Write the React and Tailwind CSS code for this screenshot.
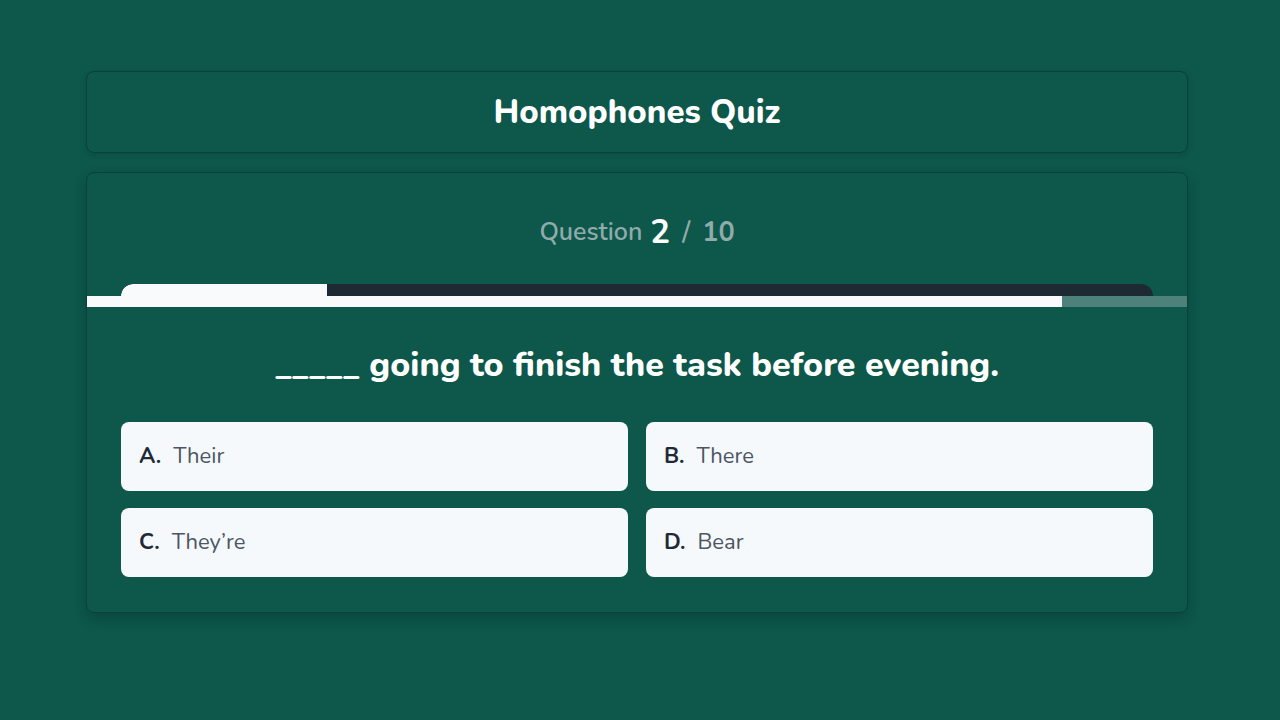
export default function App() {
  const options = [
    ["A.", "Their"],
    ["B.", "There"],
    ["C.", "They\u2019re"],
    ["D.", "Bear"],
  ];
  return (
    <div
      className="w-full min-h-[720px] bg-[#0d574b] pt-[71px] pl-[86px]"
      style={{ fontFamily: "Nunito, Lato, 'Noto Sans', sans-serif" }}
    >
      <div className="w-[1102px]">
        <div className="h-[82px] rounded-lg border border-[#0a4138] flex items-center justify-center shadow-[0_2px_6px_rgba(0,0,0,0.12)]">
          <h1 className="text-white text-[33px] font-extrabold leading-none">Homophones Quiz</h1>
        </div>
        <div className="mt-[19px] rounded-lg border border-[#0a4138] shadow-[0_6px_14px_rgba(0,0,0,0.18)] pb-[35px] overflow-hidden">
          <div className="h-[111px] flex items-center justify-center pt-[9px]">
            <span className="text-[#8fabaa] text-[25px] font-semibold">Question</span>
            <span className="text-white text-[33px] font-bold ml-2">2</span>
            <span className="text-[#8fabaa] text-[27px] font-semibold ml-3">/</span>
            <span className="text-[#8fabaa] text-[27px] font-bold ml-3">10</span>
          </div>
          <div className="px-[34px]">
            <div className="h-[12px] bg-[#1e2a33] rounded-t-full overflow-hidden">
              <div className="h-full w-[20%] bg-[#f8fafc] rounded-tl-full"></div>
            </div>
          </div>
          <div className="h-[11px] bg-[#4e8179]">
            <div className="h-full w-[88.6%] bg-[#f8fafc]"></div>
          </div>
          <div className="pt-[41px] pb-[40px] text-center text-white text-[34px] font-extrabold leading-none">
            _____ going to finish the task before evening.
          </div>
          <div className="px-[34px] grid grid-cols-2 gap-x-[18px] gap-y-[17px]">
            {options.map(([l, t]) => (
              <div key={l} className="h-[69px] bg-[#f6f9fb] rounded-lg flex items-center px-[18px] text-[22px]">
                <span className="font-bold text-[#1f2937]">{l}</span>
                <span className="ml-[12px] text-[#4b5563]">{t}</span>
              </div>
            ))}
          </div>
        </div>
      </div>
    </div>
  );
}
